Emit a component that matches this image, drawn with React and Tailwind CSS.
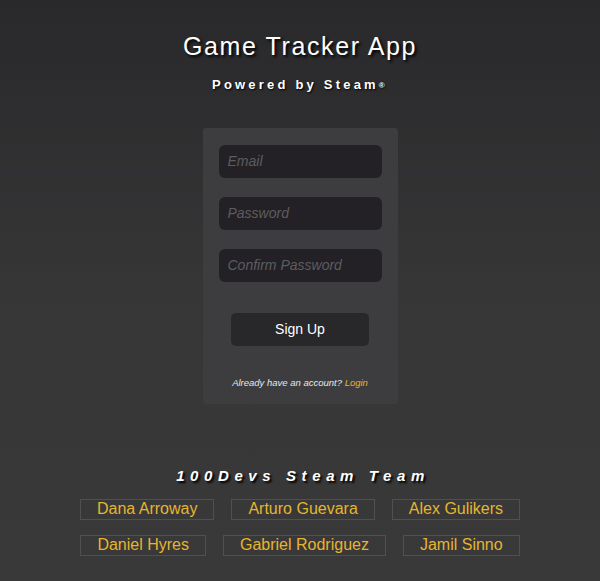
export default function App() {
  const row1 = ["Dana Arroway", "Arturo Guevara", "Alex Gulikers"];
  const row2 = ["Daniel Hyres", "Gabriel Rodriguez", "Jamil Sinno"];
  const Name = ({ n }) => (
    <div className="border border-[#505050] px-4 h-[21px] flex items-center text-[16px] leading-none text-[#e6b52e]">
      {n}
    </div>
  );
  return (
    <div
      className="w-[600px] h-[581px] overflow-hidden flex flex-col items-center bg-gradient-to-b from-[#29292b] via-[#363637] to-[#39393a] text-white"
      style={{ fontFamily: '"Liberation Sans", Arial, sans-serif' }}
    >
      <h1 className="mt-[32px] text-[25px] leading-[28px] tracking-[1.6px] [text-shadow:2px_2px_3px_#000]">
        Game Tracker App
      </h1>
      <p className="mt-[17px] text-[13px] leading-[16px] font-bold tracking-[3.2px] [text-shadow:1px_1px_2px_#000]">
        Powered by Steam<span className="text-[8px] align-middle">®</span>
      </p>
      <div className="mt-[34px] w-[195px] h-[276px] bg-[#3d3d3f] rounded-[3px] flex flex-col items-center pt-[17px]">
        <div className="flex flex-col gap-[19px]">
          {["Email", "Password", "Confirm Password"].map((p) => (
            <input
              key={p}
              placeholder={p}
              className="w-[163px] h-[33px] rounded-[6px] bg-[#232125] px-[9px] text-[14px] italic text-[#ccc] placeholder:text-[#5e5c60] outline-none"
            />
          ))}
        </div>
        <button className="mt-[31px] w-[138px] h-[33px] rounded-[5px] bg-[#28272a] text-[14px] text-white">
          Sign Up
        </button>
        <p className="mt-[30px] text-[9.5px] italic text-[#e8e8e8]">
          Already have an account? <span className="text-[#e6b52e]">Login</span>
        </p>
      </div>
      <h2 className="mt-[63px] text-[15px] leading-[18px] font-bold italic tracking-[5.6px] pl-[6px] [text-shadow:2px_2px_2px_#000]">
        100Devs Steam Team
      </h2>
      <div className="mt-[14px] flex gap-[17px]">
        {row1.map((n) => (
          <Name key={n} n={n} />
        ))}
      </div>
      <div className="mt-[15px] flex gap-[17px]">
        {row2.map((n) => (
          <Name key={n} n={n} />
        ))}
      </div>
    </div>
  );
}
